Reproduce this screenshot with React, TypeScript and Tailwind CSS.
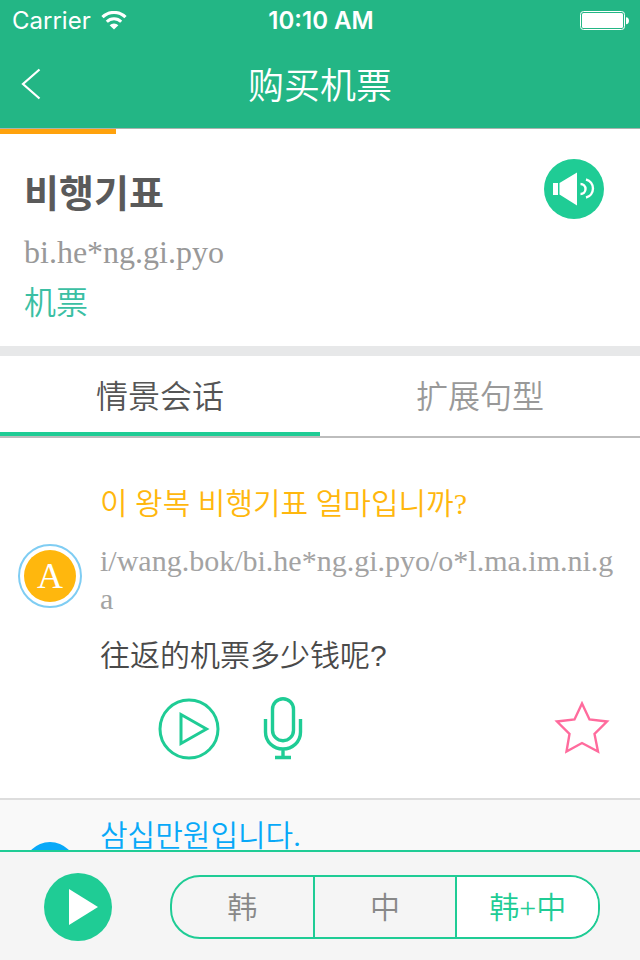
import React, { useState } from 'react';
import clsx from 'clsx';

interface Sentence {
  speaker: string;
  korean: string;
  roman: string;
  chinese: string;
}

const sentences: Sentence[] = [
  {
    speaker: 'A',
    korean: '이 왕복 비행기표 얼마입니까?',
    roman: 'i/wang.bok/bi.he*ng.gi.pyo/o*l.ma.im.ni.ga',
    chinese: '往返的机票多少钱呢?',
  },
];

const tabs = ['情景会话', '扩展句型'];
const modes = ['韩', '中', '韩+中'];
const progress = 18.1;

function StatusBar() {
  return (
    <div className="grid h-10 grid-cols-3 items-center pl-3 pr-[10px] text-2xl font-normal font-['Inter',sans-serif]">
      <div className="flex items-center gap-[10px] pt-0.5">
        <span>Carrier</span>
        <svg width="26" height="20" viewBox="0 0 26 20" fill="none" aria-hidden="true">
          <path d="M1.5 6.2a16.3 16.3 0 0 1 23 0" stroke="currentColor" strokeWidth="3.2" />
          <path d="M5.8 10.8a10.3 10.3 0 0 1 14.4 0" stroke="currentColor" strokeWidth="3" />
          <path d="M13 18.5 8.6 14.2a6.4 6.4 0 0 1 8.8 0z" fill="currentColor" />
        </svg>
      </div>
      <div className="pt-0.5 text-center font-semibold">10:10 AM</div>
      <svg className="justify-self-end" width="50" height="20" viewBox="0 0 50 20" aria-hidden="true">
        <rect x="0.5" y="1.5" width="44" height="18" rx="3" fill="none" stroke="currentColor" />
        <rect x="2" y="3" width="41" height="15" rx="1.5" fill="currentColor" />
        <path d="M46 7.2c4 0 4 7 0 7z" fill="currentColor" />
      </svg>
    </div>
  );
}

function Header() {
  return (
    <header className="border-b border-[#a9b3af] bg-[#23b685] text-white">
      <StatusBar />
      <div className="grid h-[88px] grid-cols-[64px_1fr_64px] items-center">
        <button aria-label="返回" className="flex h-full items-center pl-5">
          <svg width="22" height="32" viewBox="0 0 22 32" fill="none">
            <path d="M19.500 1.500 3 16l16.500 14.500" stroke="currentColor" strokeWidth="2.200" />
          </svg>
        </button>
        <h1 className="pt-1.5 text-center text-4xl">购买机票</h1>
      </div>
    </header>
  );
}

function Word() {
  return (
    <section className="flex items-start justify-between border-b-10 border-[#e7e8e9] pb-[21px] pl-6 pr-9 pt-[25px]">
      <div className="pt-0.5">
        <h2 className="text-[38px] font-bold leading-[66px] text-[#5a5a5a]">비행기표</h2>
        <p className="text-[32px] leading-[50px] text-[#999]">bi.he*ng.gi.pyo</p>
        <p className="pt-1 text-[32px] leading-[44px] text-[#3bbfa3]">机票</p>
      </div>
      <button aria-label="朗读">
        <svg width="60" height="60" viewBox="0 0 60 60">
          <circle cx="30" cy="30" r="30" fill="#1fcc95" />
          <path d="M9 24h5v12H9zM15.500 24 33 13.500v33L15.500 35.500z" fill="#fff" />
          <path d="M36.500 25a5 5 0 0 1 0 10M42 20.500a9.300 9.300 0 0 1 0 18" fill="none" stroke="#fff" strokeWidth="2.400" />
        </svg>
      </button>
    </section>
  );
}

function SentenceCard({ sentence }: { sentence: Sentence }) {
  return (
    <article className="border-b-2 border-[#ddd] pb-[37px] pt-[47px]">
      <div className="flex items-start gap-[18px] pl-[18px] pr-5">
        <div className="mt-[59px] size-16 shrink-0 rounded-full border-2 border-[#7fcdf3] p-1">
          <div className="flex size-full items-center justify-center rounded-full bg-[#ffb70d] text-4xl text-white">
            {sentence.speaker}
          </div>
        </div>
        <div className="flex min-w-0 flex-col gap-[19px] text-[30px] leading-[38px]">
          <p className="text-[#ffb70d]">{sentence.korean}</p>
          <p className="break-all text-[#a3a3a3]">{sentence.roman}</p>
          <p className="font-['Liberation_Sans','Noto_Sans_CJK_SC',sans-serif] text-[#4a4a4a]">{sentence.chinese}</p>
        </div>
      </div>
      <div className="mt-[22px] flex items-center pl-[158px] pr-[30px] text-[#1fcc95]">
        <button aria-label="播放句子">
          <svg width="62" height="64" viewBox="0 0 62 64" fill="none" stroke="currentColor" strokeWidth="3">
            <circle cx="31" cy="32" r="29" />
            <path d="M23 17.500v29L48.500 32z" />
          </svg>
        </button>
        <button aria-label="录音" className="ml-[43px]">
          <svg width="40" height="64" viewBox="0 0 40 64" fill="none" stroke="currentColor" strokeWidth="3.4">
            <rect x="9.500" y="1.700" width="21" height="42" rx="10.500" />
            <path d="M2.500 22v13c0 10 8 17 17.500 17s17.500-7 17.500-17V22M20 52v8M12 60.500h16" />
          </svg>
        </button>
        <button aria-label="收藏" className="ml-auto text-[#ff6b9d]">
          <svg width="56" height="56" viewBox="0 0 56 56" fill="none" stroke="currentColor" strokeWidth="2.400">
            <path d="M28 2.500 35.500 18.500 53 20.500 40.500 33 44 50.500 28 42 12.500 50.500 15.500 33 3 20.500 20.500 18.500z" />
          </svg>
        </button>
      </div>
    </article>
  );
}

export default function App() {
  const [tab, setTab] = useState(0);
  const [mode, setMode] = useState(2);

  return (
    <div className="flex h-screen flex-col bg-white font-[350] font-['Liberation_Serif','Noto_Sans_CJK_SC','Noto_Sans_CJK_KR',serif]">
      <Header />
      <div className="h-[5px] shrink-0">
        <div className="h-full bg-[#ffa20d]" style={{ width: `${progress}%` }} />
      </div>
      <main className="min-h-0 flex-1 overflow-hidden">
        <Word />
        <div role="tablist" className="flex border-b-2 border-[#bdbdbd]">
          {tabs.map((label, i) => (
            <button
              key={label}
              role="tab"
              aria-selected={tab === i}
              onClick={() => setTab(i)}
              className={clsx(
                'h-20 flex-1 border-b-4 pt-1.5 text-[32px]',
                tab === i ? 'border-[#1fcc95] text-[#555]' : 'border-transparent text-[#999]'
              )}
            >
              {label}
            </button>
          ))}
        </div>
        {sentences.map((s) => (
          <SentenceCard key={s.korean} sentence={s} />
        ))}
        <article className="flex items-start gap-6 bg-[#f9f9f9] pl-6 pt-[17px]">
          <div className="mt-[25px] size-[52px] rounded-full bg-[#08a9f8]" />
          <p className="text-[30px] leading-[38px] text-[#08a9f8]">삼십만원입니다.</p>
        </article>
      </main>
      <footer className="flex items-center gap-[58px] border-t-2 border-[#1fcc95] bg-[#f5f5f5] pb-[19px] pl-11 pr-10 pt-[21px]">
        <button aria-label="全部播放">
          <svg width="68" height="68" viewBox="0 0 68 68">
            <circle cx="34" cy="34" r="34" fill="#1fcc95" />
            <path d="M25 16v36l29-18z" fill="#fff" />
          </svg>
        </button>
        <div className="flex h-16 flex-1 divide-x-2 divide-[#1fcc95] overflow-hidden rounded-[30px] border-2 border-[#1fcc95]">
          {modes.map((label, i) => (
            <button
              key={label}
              aria-pressed={mode === i}
              onClick={() => setMode(i)}
              className={clsx(
                'flex-1 text-[30px]',
                mode === i ? 'bg-white text-[#1fcc95]' : 'text-[#888]'
              )}
            >
              {label}
            </button>
          ))}
        </div>
      </footer>
    </div>
  );
}
